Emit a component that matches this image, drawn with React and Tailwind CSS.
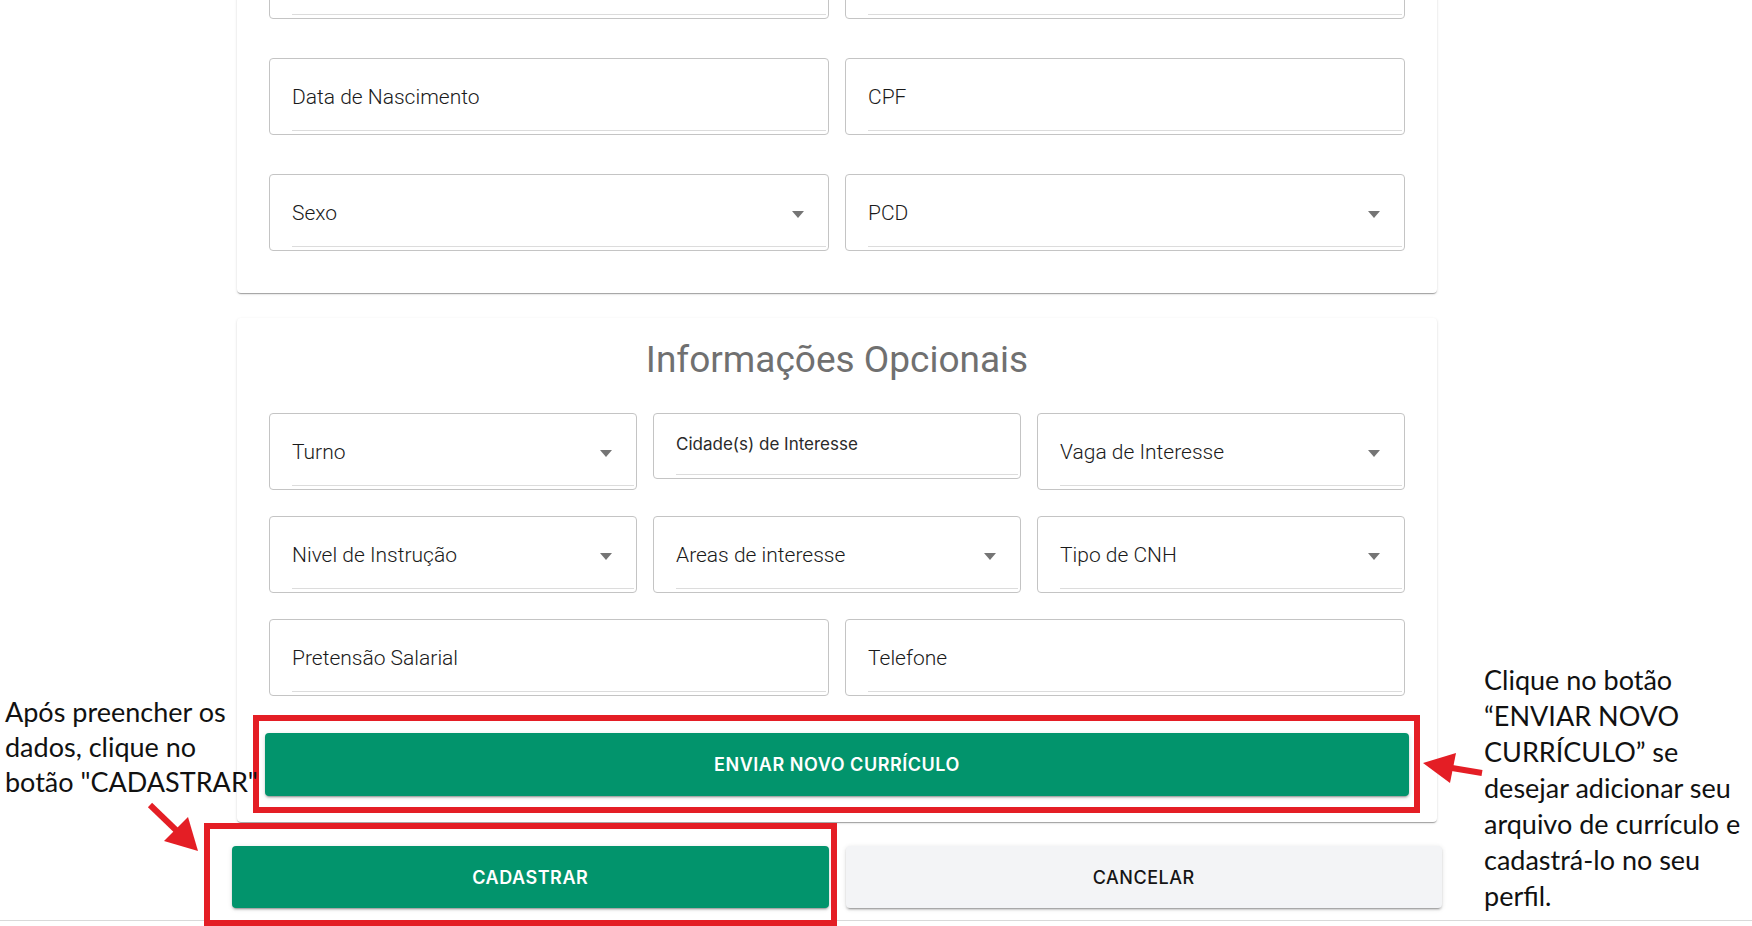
import React from 'react'

const cardShadow =
  'shadow-[0_2px_1px_-1px_rgba(0,0,0,0.2),0_1px_1px_0_rgba(0,0,0,0.14),0_1px_3px_0_rgba(0,0,0,0.12)]'
const btnShadow =
  'shadow-[0_3px_1px_-2px_rgba(0,0,0,0.2),0_2px_2px_0_rgba(0,0,0,0.14),0_1px_5px_0_rgba(0,0,0,0.12)]'

function Caret() {
  return (
    <svg width="12" height="7" viewBox="0 0 12 7" className="shrink-0">
      <polygon points="0,0 12,0 6,7" fill="#757575" />
    </svg>
  )
}

function Field({ label, select, small }) {
  return (
    <div
      className={`rounded border border-[#c4c4c4] bg-white pl-[22px] pr-[2px] pb-[3px] ${
        small ? 'h-[66px] self-start pt-[2px]' : 'h-[77px] pt-[7px]'
      }`}
    >
      <div className="h-full flex items-center justify-between border-b border-[#dcdcdc] pr-[22px]">
        <span
          className={
            small
              ? "font-['Inter',sans-serif] text-[17px] text-[#2a2a2a]"
              : "font-['Roboto',sans-serif] font-light text-[21px] text-[#1a1a1a]"
          }
        >
          {label}
        </span>
        {select && <Caret />}
      </div>
    </div>
  )
}

export default function App() {
  return (
    <div className="relative min-h-screen h-[926px] overflow-hidden bg-white font-['Inter','Roboto',sans-serif]">
      <div className="ml-[237px] w-[1200px] -mt-[90px]">
        {/* Dados pessoais (parte visível) */}
        <section className={`bg-white rounded ${cardShadow} px-8 pt-8 pb-[42px]`}>
          <div className="grid grid-cols-2 gap-x-4 gap-y-[39px]">
            <Field label="" />
            <Field label="" />
            <Field label="Data de Nascimento" />
            <Field label="CPF" />
            <Field label="Sexo" select />
            <Field label="PCD" select />
          </div>
        </section>

        <section className={`mt-[25px] bg-white rounded ${cardShadow} px-8 pt-[22px] pb-[26px]`}>
          <h2 className="text-center font-['Roboto',sans-serif] text-[37px] leading-[40px] text-[#707070] mb-[33px]">
            Informações Opcionais
          </h2>
          <div className="grid grid-cols-3 gap-x-4 gap-y-[26px]">
            <Field label="Turno" select />
            <Field label="Cidade(s) de Interesse" small />
            <Field label="Vaga de Interesse" select />
            <Field label="Nivel de Instrução" select />
            <Field label="Areas de interesse" select />
            <Field label="Tipo de CNH" select />
          </div>
          <div className="grid grid-cols-2 gap-x-4 mt-[26px]">
            <Field label="Pretensão Salarial" />
            <Field label="Telefone" />
          </div>
          <button
            className={`mt-[37px] -ml-[4px] w-[1144px] h-[63px] rounded bg-[#02946c] text-white text-[18px] font-semibold tracking-[0.03em] ${btnShadow}`}
          >
            ENVIAR NOVO CURRÍCULO
          </button>
        </section>

        <div className="-mx-[5px] mt-[24px] grid grid-cols-2 gap-[17px]">
          <button
            className={`h-[62px] rounded bg-[#02946c] text-white text-[18px] font-semibold tracking-[0.03em] ${btnShadow}`}
          >
            CADASTRAR
          </button>
          <button
            className={`h-[62px] rounded bg-[#f3f4f6] text-[#151515] text-[18px] font-medium tracking-[0.03em] ${btnShadow}`}
          >
            CANCELAR
          </button>
        </div>
      </div>

      <div className="absolute left-0 right-0 top-[920px] h-px bg-[#d9d9d9]" />

      {/* Anotações */}
      <div className="absolute left-[253px] top-[715px] w-[1167px] h-[98px] border-[6px] border-[#e41e25]" />
      <div className="absolute left-[204px] top-[823px] w-[633px] h-[103px] border-[6px] border-[#e41e25]" />

      <p className="absolute left-[5px] top-[694px] font-['Lato',sans-serif] text-[27px] leading-[35px] text-[#111]">
        Após preencher os
        <br />
        dados, clique no
        <br />
        botão "CADASTRAR"
      </p>

      <p className="absolute left-[1484px] top-[662px] font-['Lato',sans-serif] text-[27px] leading-[36px] text-[#111]">
        Clique no botão
        <br />
        “ENVIAR NOVO
        <br />
        CURRÍCULO” se
        <br />
        desejar adicionar seu
        <br />
        arquivo de currículo e
        <br />
        cadastrá-lo no seu
        <br />
        perfil.
      </p>

      <svg className="absolute left-0 top-0 pointer-events-none" width="1752" height="926">
        <line x1="150" y1="805" x2="178" y2="832" stroke="#e41e25" strokeWidth="6" />
        <polygon points="198,851 164,841 188,817" fill="#e41e25" />
        <line x1="1482" y1="773" x2="1446" y2="767" stroke="#e41e25" strokeWidth="6" />
        <polygon points="1423,763 1456,753 1450,783" fill="#e41e25" />
      </svg>
    </div>
  )
}
